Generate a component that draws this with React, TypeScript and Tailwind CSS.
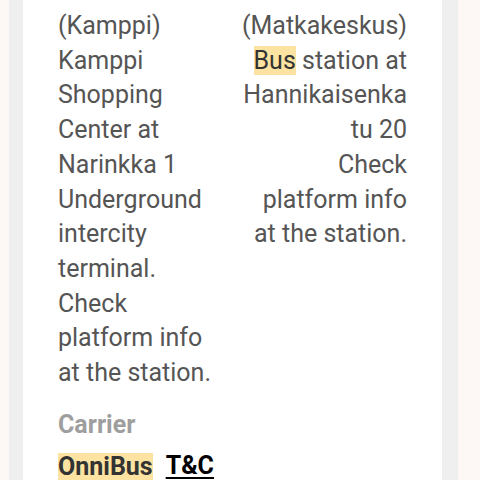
import React from "react";

export default function App() {
  return (
    <div className="w-[480px] h-[480px] overflow-hidden bg-[#fdf7f6] flex" style={{ fontFamily: "Roboto, 'Noto Sans', sans-serif" }}>
      <div className="ml-[9px] w-[449px] h-full bg-[#efefef] pl-[14px] pr-[16px]">
        <div className="h-full bg-white px-[35px] pt-[9px]">
          <div className="grid grid-cols-2 gap-x-[14px] text-[25px] leading-[34.7px] text-[#555555]">
            <div className="break-words">
              (Kamppi) Kamppi Shopping Center at Narinkka 1 Underground intercity terminal.
              <br />
              Check platform info at the station.
            </div>
            <div className="break-words text-right">
              (Matkakeskus) <span className="bg-[#fde3a1] text-[#333333]">Bus</span> station at Hannikaisenkatu 20
              <br />
              Check platform info at the station.
            </div>
          </div>
          <div className="mt-[17px] text-[25px] leading-[34.7px] font-bold text-[#9e9e9e]">Carrier</div>
          <div className="mt-[7px] flex items-center gap-[13px] text-[25px] leading-[34.7px] font-bold">
            <span className="bg-[#fde3a1] text-[#333333] leading-[28px]">OnniBus</span>
            <span className="text-black underline underline-offset-[3px]">T&amp;C</span>
          </div>
        </div>
      </div>
    </div>
  );
}
